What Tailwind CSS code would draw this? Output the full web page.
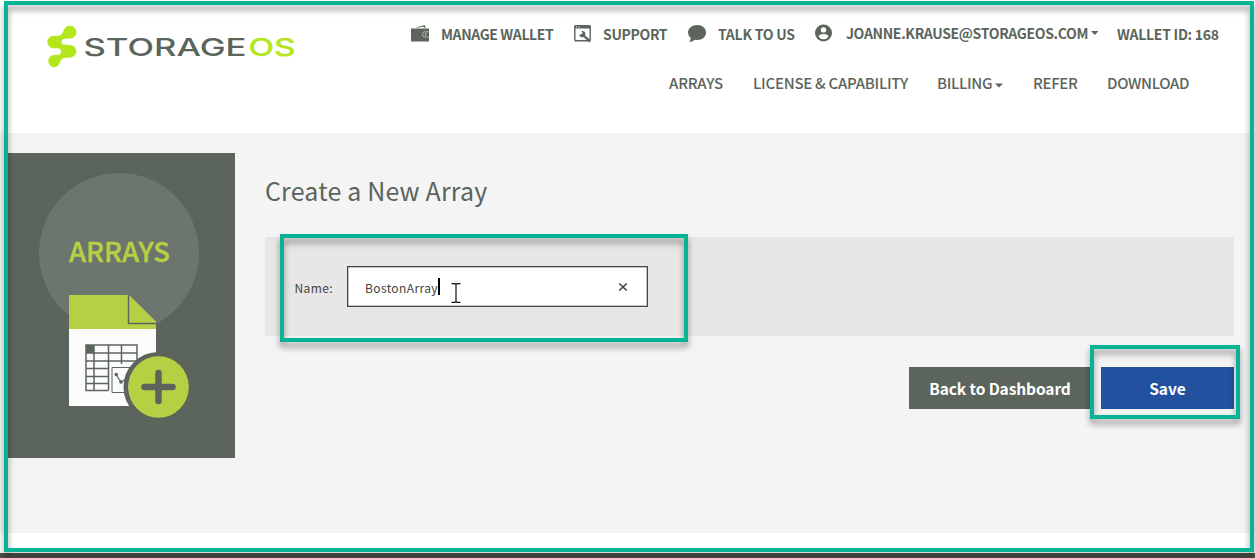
<!DOCTYPE html>
<html lang="en">
<head>
<meta charset="utf-8">
<title>StorageOS - Create a New Array</title>
<script src="https://cdn.jsdelivr.net/npm/@tailwindcss/browser@4"></script>
</head>
<body class="relative flex h-[558px] w-[1255px] flex-col overflow-hidden bg-white font-['Noto_Sans_CJK_SC','Noto_Sans',sans-serif] text-[#5b655c]">
<header class="flex h-[133px] shrink-0 whitespace-nowrap">
  <svg class="mt-[20px] ml-[44px] h-[52px] w-[260px] shrink-0" viewBox="44 20 260 52" aria-label="StorageOS">
    <path fill="#b4e61e" stroke="#b4e61e" stroke-width=".5" d="M53.500 36L58 36C61.500 36 62.500 33.500 64 30C65 27.500 67 26 70 26A6 6 0 0 1 70 38.300L65 38.500C62.500 38.700 61.300 40 61.300 42C61.300 44 62.500 45 65 45.100L70 45.200A6 6 0 0 1 70 57.400L66 57.500C62 57.700 61 59.500 59.500 62.500A6 6 0 0 1 53.500 67A6 6 0 0 1 53.500 55.200L57.500 55C60.500 54.900 61.300 53.500 61.300 51.700C61.300 49.500 60.300 48.200 57.500 48L53.500 48A6 6 0 0 1 53.500 36Z"/>
    <text x="83.500" y="56" font-family="Inter, sans-serif" font-size="24" font-weight="500" fill="#5b655c" textLength="163" lengthAdjust="spacingAndGlyphs">STORAGE</text>
    <text x="248.500" y="56" font-family="Inter, sans-serif" font-size="24" font-weight="500" fill="#b4e61e" stroke="#b4e61e" stroke-width=".3" textLength="47" lengthAdjust="spacingAndGlyphs">OS</text>
  </svg>
  <div class="ml-[107px] flex flex-col">
    <div class="flex pt-[24px] text-[14px] leading-[20px] font-bold">
      <svg class="mr-[12px] w-[18px]" height="20" viewBox="0 0 18 20"><path d="M5 3.500L13.500 1L15 3.500H13L12 2.500L7 3.800Z" fill="#5b655c"/><path d="M0 4.500H18V17.500H0Z" fill="#5b655c"/><path d="M18 7.800H13.500Q11.500 8 11.500 10.500T13.500 13H18M14.500 9V12M14.500 9H16" fill="none" stroke="#c2c8c3" stroke-width=".8"/></svg>
      <span class="w-[133px] tracking-[-0.38px]">MANAGE WALLET</span>
      <svg class="mr-[12px] w-[17px]" height="20" viewBox="0 0 17 20"><rect x=".8" y="1.800" width="15.400" height="15" rx="1" fill="none" stroke="#5b655c" stroke-width="1.400"/><path d="M.5 1.500H16.500V4.500H.5Z" fill="#5b655c"/><path d="M2 3H3M4.500 3H5.500" stroke="#fff" stroke-width="1"/><path d="M5 10.500Q7 11 8.500 9.500Q8.500 8 7.500 7Q11 6.500 11.500 10L11.200 11.500L17 16.500L15.500 18.500L9.500 13Q6 14 5 10.500Z" fill="#5b655c"/></svg>
      <span class="w-[85px] tracking-[-0.35px]">SUPPORT</span>
      <svg class="mr-[12px] w-[18px]" height="20" viewBox="0 0 18 20"><path d="M9.500 1C14.500 1 18 4.500 18 8.500C18 13 14 16 9.500 16L7 15.700Q4 18 1.200 18Q3 16 2.700 13.800Q0 12 0 8.500C0 4.500 4 1 9.500 1Z" fill="#5b655c"/></svg>
      <span class="w-[97px] tracking-[-0.25px]">TALK TO US</span>
      <svg class="mr-[14px] w-[17px]" height="20" viewBox="0 0 17 20"><circle cx="8.500" cy="9" r="8.500" fill="#5b655c"/><circle cx="8.500" cy="5.900" r="2.700" fill="#fff"/><path d="M3.500 12.500Q4 10 8.500 10T13.500 12.500Q12 15.200 8.500 15.200T3.500 12.500Z" fill="#fff"/></svg>
      <span class="-mt-px w-[245px] tracking-[-0.33px]">JOANNE.KRAUSE@STORAGEOS.COM</span>
      <svg class="w-[26px]" height="20" viewBox="0 0 26 20"><path d="M0 7H7.500L3.800 11Z" fill="#5b655c"/></svg>
      <span class="tracking-[-0.28px]">WALLET ID: 168</span>
    </div>
    <div class="flex pt-[29px] pl-[258px] text-[15px] leading-[20px] font-medium">
      <span class="w-[84px] tracking-[-0.2px]">ARRAYS</span>
      <span class="w-[184px] tracking-[-0.26px]">LICENSE &amp; CAPABILITY</span>
      <span class="w-[58px] tracking-[-0.35px]">BILLING</span>
      <svg class="w-[38px]" height="20" viewBox="0 0 38 20"><path d="M0 10.500H8L4 14.500Z" fill="#5b655c"/></svg>
      <span class="w-[74px] tracking-[-0.35px]">REFER</span>
      <span class="tracking-[-0.35px]">DOWNLOAD</span>
    </div>
  </div>
</header>

<main class="flex h-[400px] shrink-0 items-start bg-[#f4f4f4] pt-[20px] pl-[8px] whitespace-nowrap">
  <aside class="h-[305px] w-[227px] shrink-0 bg-[#5b655c]">
    <svg width="227" height="305" viewBox="8 153 227 305">
      <circle cx="119" cy="253" r="80" fill="#6c766e"/>
      <text x="69" y="261.500" font-size="27.500" font-weight="500" fill="#b5d143" stroke="#b5d143" stroke-width=".4" textLength="101" lengthAdjust="spacingAndGlyphs">ARRAYS</text>
      <path d="M69 295H128.500L156 322V406H69Z" fill="#fafbfa"/>
      <path d="M69 295H129L156 322V329H69Z" fill="#b5d143"/>
      <path d="M128.500 295V323.500H156" fill="none" stroke="#5b655c" stroke-width="1.500"/>
      <g fill="none" stroke="#5b655c" stroke-width="1.500">
        <path d="M108.500 390.500H86V345H137V366M86 353H137M86 361H137M86 368.500H109M86 376.500H109M86 383.500H109M94 345V390.500M108.500 345V390.500M121.500 345V364"/>
        <path d="M137 367.500H112V392.500H134" stroke-width="1"/>
        <path d="M116 374.500L121 382L128 378" stroke-width="1.200"/>
      </g>
      <path d="M86 345H94V353H86Z" fill="#5b655c"/>
      <circle cx="116.300" cy="374.500" r="1.800" fill="#5b655c"/><circle cx="121" cy="382" r="1.800" fill="#5b655c"/>
      <circle cx="158.500" cy="387" r="32.500" fill="none" stroke="#5b655c" stroke-width="5"/>
      <ellipse cx="158.500" cy="387" rx="30.300" ry="30.800" fill="#b5d143"/>
      <path d="M144.500 387H172.500M158.500 373V401" stroke="#5b655c" stroke-width="6.500" stroke-linecap="round"/>
    </svg>
  </aside>
  <section class="ml-[30px] flex w-[969px] flex-col">
    <h1 class="mt-[17px] h-[67px] text-[25px] leading-[40px] font-normal tracking-[0.17px]">Create a New Array</h1>
    <div class="flex h-[99px] items-start bg-[#e8e6e6] pt-[29px] pl-[29.500px]">
      <label class="w-[52.500px] pt-[12px] text-[12px] leading-[20px] tracking-[0.4px] text-[#444]">Name:</label>
      <div class="flex h-[41px] w-[301px] items-center border border-[#454545] bg-white pl-[17px] text-[12px] text-[#444] ring-[0.5px] ring-[#454545]/60 ring-inset">
        <span class="w-[73px] pt-[3px] tracking-[0.38px]">BostonArray</span>
        <span class="h-[17px] w-[1.500px] bg-black"></span>
        <svg class="mt-[12px] ml-[11.500px]" width="10" height="20" viewBox="0 0 10 20"><path d="M.5 .7H4L5 1.500L6 .7H9.500M5 1V19M.5 19.300H4L5 18.500L6 19.300H9.500" fill="none" stroke="#111" stroke-width="1.200"/></svg>
        <svg class="mt-[1px] ml-[157px]" width="10" height="10" viewBox="0 0 10 10"><path d="M1.300 1.500L8.700 8.500M8.700 1.500L1.300 8.500" stroke="#444" stroke-width="1.700"/></svg>
      </div>
    </div>
    <div class="mt-[31px] flex justify-end gap-[10px] text-center text-[15.5px] leading-[42px] font-bold text-white">
      <button class="h-[42px] w-[182px] bg-[#5b655c] tracking-[-0.1px]">Back to Dashboard</button>
      <button class="h-[42px] w-[133px] bg-[#2251a0]">Save</button>
    </div>
  </section>
</main>
<div class="h-[20px] shrink-0 bg-white"></div>
<footer class="h-[5px] shrink-0 bg-[#4b5048]"></footer>

<div class="pointer-events-none absolute top-px left-[4px] h-[551px] w-[1250px] border-4 border-[#08b294] drop-shadow-[0_5px_3px_rgba(0,0,0,0.4)]"></div>
<div class="pointer-events-none absolute top-[234px] left-[280px] h-[108px] w-[408px] border-4 border-[#08b294] drop-shadow-[0_5px_3px_rgba(0,0,0,0.4)]"></div>
<div class="pointer-events-none absolute top-[345px] left-[1090px] h-[74px] w-[150px] border-4 border-[#08b294] drop-shadow-[0_5px_3px_rgba(0,0,0,0.4)]"></div>
</body>
</html>
